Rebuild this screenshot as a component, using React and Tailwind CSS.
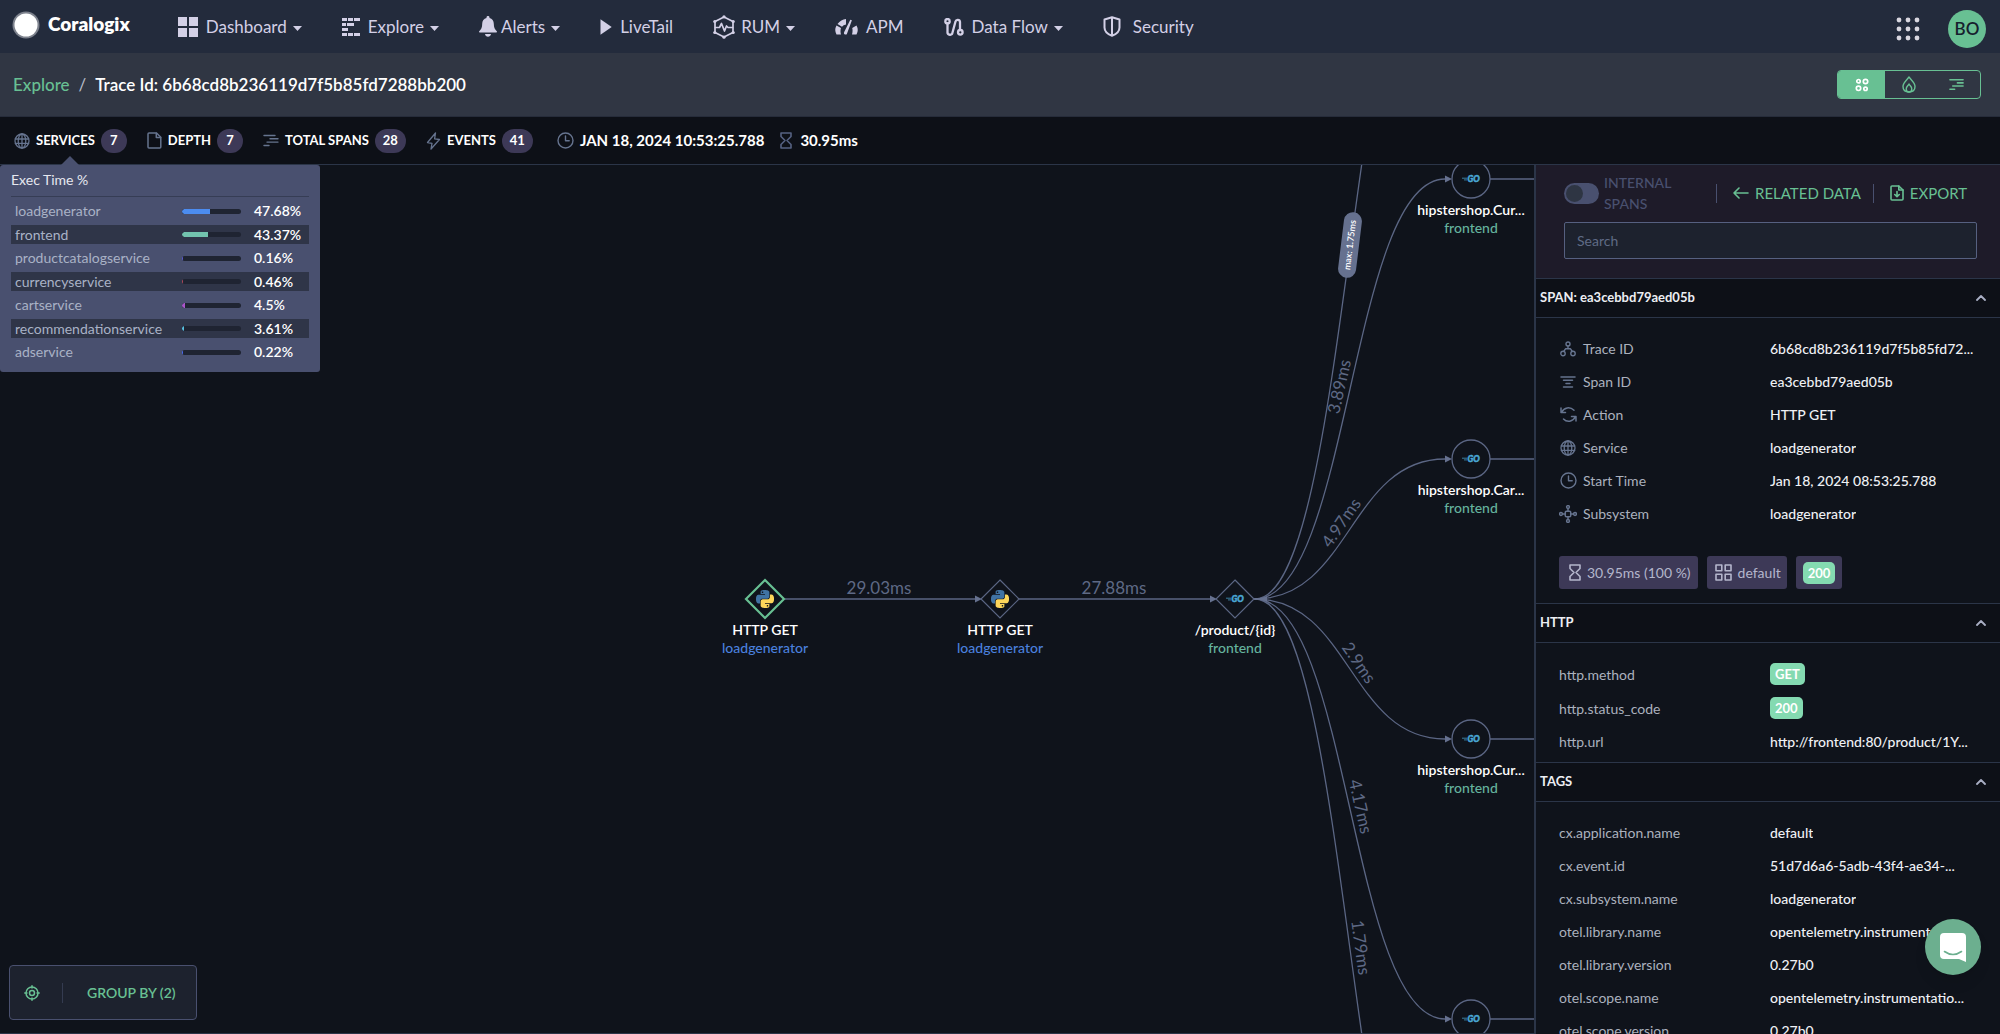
import React from "react";

const LINE = "#5b6684";

function Svg({ size = 16, w, h, box = 24, sw = 2, className = "", children }) {
  return (
    <svg
      width={w || size}
      height={h || size}
      viewBox={typeof box === "number" ? `0 0 ${box} ${box}` : box}
      fill="none"
      stroke="currentColor"
      strokeWidth={sw}
      strokeLinecap="round"
      strokeLinejoin="round"
      className={"shrink-0 " + className}
      aria-hidden="true"
    >
      {children}
    </svg>
  );
}

/* ---------- navigation icons ---------- */

const DashboardIcon = () => (
  <Svg size={20} box={20}>
    <g fill="currentColor" stroke="none">
      <rect x="0" y="0" width="9" height="9" />
      <rect x="11" y="0" width="9" height="9" />
      <rect x="0" y="11" width="9" height="9" />
      <rect x="11" y="11" width="9" height="9" />
    </g>
  </Svg>
);

const ExploreIcon = () => (
  <Svg size={18} box={18}>
    <g fill="currentColor" stroke="none">
      <path d="M0 0h5v3H0zM6 0h5v3H6zM12 0h6v3h-6zM0 5h4v3H0zM5 5h7v3H5zM0 10h6v3H0zM0 15h5v3H0zM6 15h5v3H6zM12 15h6v3h-6z" />
    </g>
  </Svg>
);

const BellIcon = () => (
  <Svg w={18} h={21} box="0 0 18 21">
    <path
      d="M9 0c.9 0 1.5.6 1.5 1.4v.6c2.7.7 4.3 3 4.3 5.8 0 4 1 5.7 3 7.4.4.4.1 1.2-.5 1.2H.7c-.6 0-.9-.8-.5-1.2 2-1.7 3-3.4 3-7.4C3.2 5 4.8 2.7 7.5 2v-.6C7.5.6 8.1 0 9 0zM6 18h6c-.3 1.7-1.5 2.7-3 2.7S6.3 19.7 6 18z"
      fill="currentColor"
      stroke="none"
    />
  </Svg>
);

const PlayIcon = () => (
  <Svg w={12} h={16} box="0 0 12 16">
    <path d="M0.5 0.3L11.7 8L0.5 15.7z" fill="currentColor" stroke="none" />
  </Svg>
);

const RumIcon = () => (
  <Svg w={22} h={24} box="0 0 22 24" sw={1.7}>
    <path d="M11 2L20 6.5V17.5L11 22L2 17.5V6.5z" />
    <path d="M2.5 12.5H6.5L8.5 8.5L11.5 16L13.5 11L15 12.5H19.5" />
    <g fill="currentColor" stroke="none">
      <circle cx="11" cy="1.8" r="1.6" />
      <circle cx="11" cy="22.2" r="1.6" />
      <circle cx="1.8" cy="6.5" r="1.6" />
      <circle cx="20.2" cy="6.5" r="1.6" />
      <circle cx="1.8" cy="17.5" r="1.6" />
      <circle cx="20.2" cy="17.5" r="1.6" />
    </g>
  </Svg>
);

const ApmIcon = () => (
  <Svg w={23} h={16} box="0 0 23 16">
    <g fill="currentColor" stroke="none">
      <path d="M1.5 6.5L6 9Q5 12 6 15.5H1.5Q-1 11 1.5 6.5z" />
      <path d="M2.5 5Q6 .5 11 0V5.5Q8.3 6 7 7.8z" />
      <path d="M15.3.8L16.9 1.3 11.8 15.3Q10.5 16 9.2 15 8.5 14 9.3 12.8z" />
      <path d="M21.5 6.5L17.2 9Q18 12 17 15.5H21.5Q24 11 21.5 6.5z" />
    </g>
  </Svg>
);

const FlowIcon = () => (
  <Svg w={20} h={18} box="0 0 20 18" sw={2.3}>
    <circle cx="3.5" cy="3.2" r="2.2" />
    <circle cx="16.3" cy="14.3" r="2.3" />
    <path d="M3.5 5.5V14A2.5 2.5 0 0 0 8.5 14.5L11.5 3.5A2.3 2.3 0 0 1 16 3.8V11.5" />
  </Svg>
);

const ShieldIcon = () => (
  <Svg w={18} h={21} box="0 0 18 21" sw={2}>
    <path d="M9 1.2L16.5 3.5V11.5C16.5 15.5 13 18.3 9 19.7C5 18.3 1.5 15.5 1.5 11.5V3.5z" />
    <path d="M9 2V19" />
  </Svg>
);

const Caret = () => (
  <Svg w={9} h={5} box="0 0 9 5" className="mt-1">
    <path d="M0 0h9L4.5 5z" fill="currentColor" stroke="none" />
  </Svg>
);

/* ---------- small line icons ---------- */

const GlobeIcon = () => (
  <Svg size={16} box={16} sw={1.3}>
    <circle cx="8" cy="8" r="7" />
    <ellipse cx="8" cy="8" rx="3.8" ry="7" />
    <path d="M8 1V15M1.3 6H14.7M1.3 10.3H14.7" />
  </Svg>
);

const FileIcon = () => (
  <Svg w={15} h={17} box="0 0 15 17" sw={1.5}>
    <path d="M2 1H9.5L13.8 5.3V15A1 1 0 0 1 12.8 16H2A1 1 0 0 1 1 15V2A1 1 0 0 1 2 1z" />
    <path d="M9.3 1.2V5.5H13.6" />
  </Svg>
);

const SpansIcon = () => (
  <Svg w={16} h={13} box="0 0 16 13" sw={1.4}>
    <path d="M1 1.5H12M7 4.8H15M4 8.1H15M1 11.5H6" />
  </Svg>
);

const BoltIcon = () => (
  <Svg w={15} h={18} box="0 0 15 18" sw={1.3}>
    <path d="M9.5 1L1.5 10.5L6 11.3L5 17L13.5 7.5L8.6 6.8z" />
  </Svg>
);

const ClockIcon = () => (
  <Svg size={17} box={17} sw={1.4}>
    <circle cx="8.5" cy="8.5" r="7.5" />
    <path d="M8.5 4V8.8H12.2" />
  </Svg>
);

const HourglassIcon = () => (
  <Svg w={12} h={17} box="0 0 12 17" sw={1.6}>
    <path d="M1 1H11V4.5L7 8.5L11 12.5V16H1V12.5L5 8.5L1 4.5z" />
  </Svg>
);

const TreeIcon = () => (
  <Svg size={16} box={16} sw={1.4}>
    <circle cx="8" cy="3" r="2" />
    <circle cx="3" cy="12.5" r="2.2" />
    <circle cx="13" cy="12.5" r="2.2" />
    <path d="M8 5V7.5M4 10L5.5 7.8H10.5L12 10" />
  </Svg>
);

const SpanIdIcon = () => (
  <Svg size={16} box={16} sw={1.5}>
    <path d="M1 3H15M3.5 6.3H12.5M6 9.6H10M3.5 12.9H12.5" />
  </Svg>
);

const RefreshIcon = () => (
  <Svg size={17} box={17} sw={1.5}>
    <path d="M1 2V6.5H5.5M1.8 6C4 1.3 10 .3 14 4.3" />
    <path d="M16 15V10.5H11.5M15.2 11C13 15.7 7 16.7 3.5 13" />
  </Svg>
);

const NodesIcon = () => (
  <Svg size={18} box={18} sw={1.5}>
    <rect x="6.3" y="6.3" width="5.4" height="5.4" rx="1" />
    <circle cx="9" cy="2" r="1.4" />
    <circle cx="9" cy="16" r="1.4" />
    <circle cx="2" cy="9" r="1.4" />
    <circle cx="16" cy="9" r="1.4" />
    <path d="M9 3.5V6M9 12V14.5M3.5 9H6M12 9H14.5" />
  </Svg>
);

const GridIcon = () => (
  <Svg size={17} box={17} sw={1.6}>
    <rect x="1" y="1" width="5.8" height="5.8" />
    <rect x="10.2" y="1" width="5.8" height="5.8" />
    <rect x="1" y="10.2" width="5.8" height="5.8" />
    <rect x="10.2" y="10.2" width="5.8" height="5.8" />
  </Svg>
);

const ArrowLeftIcon = () => (
  <Svg w={16} h={12} box="0 0 16 12" sw={1.6}>
    <path d="M6 1L1 6L6 11M1 6H15" />
  </Svg>
);

const ExportIcon = () => (
  <Svg w={14} h={16} box="0 0 14 16" sw={1.6}>
    <path d="M2 1H8.8L13 5V14A1 1 0 0 1 12 15H2A1 1 0 0 1 1 14V2A1 1 0 0 1 2 1z" />
    <path d="M7 6.5V11.5M4.7 9.5L7 11.7L9.3 9.5M8.8 1V5H13" />
  </Svg>
);

const TargetIcon = () => (
  <Svg size={16} box={16} sw={1.5}>
    <circle cx="8" cy="8" r="6" />
    <circle cx="8" cy="8" r="2.5" />
    <path d="M8 .8V3M8 13V15.2M.8 8H3M13 8H15.2" />
  </Svg>
);

const ChevronUp = () => (
  <Svg w={10} h={6} box="0 0 10 6" sw={1.8} className="text-[#a9afc4]">
    <path d="M1 5L5 1L9 5" />
  </Svg>
);

/* ---------- header ---------- */

const NAV = [
  { label: "Dashboard", icon: <DashboardIcon />, menu: true, gap: "gap-2" },
  { label: "Explore", icon: <ExploreIcon />, menu: true, gap: "gap-2" },
  { label: "Alerts", icon: <BellIcon />, menu: true, gap: "gap-1" },
  { label: "LiveTail", icon: <PlayIcon />, gap: "gap-2" },
  { label: "RUM", icon: <RumIcon />, menu: true, gap: "gap-1.5" },
  { label: "APM", icon: <ApmIcon />, gap: "gap-2" },
  { label: "Data Flow", icon: <FlowIcon />, menu: true, gap: "gap-2" },
  { label: "Security", icon: <ShieldIcon />, gap: "gap-3" },
];

function Header() {
  return (
    <header className="flex h-[53px] shrink-0 items-center bg-[#232b3c] pl-3 pr-[14px]">
      <a href="#home" className="flex items-center gap-2 pb-1">
        <svg width="28" height="28" viewBox="0 0 28 28" aria-hidden="true">
          <circle cx="14" cy="14" r="13.5" fill="#7d828d" />
          <circle cx="14" cy="14" r="11.5" fill="#fff" />
        </svg>
        <span className="text-[19px] font-extrabold text-white">Coralogix</span>
      </a>
      <nav className="ml-12 flex items-center gap-10 text-[17px] text-[#d3d0e6]">
        {NAV.map((n) => (
          <button key={n.label} className={"flex items-center " + n.gap}>
            {n.icon}
            <span className="flex items-center gap-[6px]">
              {n.label}
              {n.menu && <Caret />}
            </span>
          </button>
        ))}
      </nav>
      <div className="ml-auto flex items-center gap-7">
        <button aria-label="Apps" className="mt-1 text-[#d9d7e0]">
          <svg width="24" height="24" viewBox="0 0 24 24" fill="currentColor" aria-hidden="true">
            {[3, 12, 21].map((y) => [3, 12, 21].map((x) => <circle key={x + "-" + y} cx={x} cy={y} r="2.4" />))}
          </svg>
        </button>
        <button className="mt-1 flex h-[38px] w-[38px] items-center justify-center rounded-full bg-[#68c093] text-[17px] font-semibold text-[#16202e]">
          BO
        </button>
      </div>
    </header>
  );
}

function Breadcrumb() {
  return (
    <div className="flex h-16 shrink-0 items-center justify-between border-b border-[#262c3a] bg-[#303643] pl-[13px] pr-[19px]">
      <div className="flex items-center gap-[9px] text-[17px]">
        <a href="#explore" className="font-medium text-[#68c093]">Explore</a>
        <span className="text-[#b9bdc9]">/</span>
        <h1 className="font-semibold text-white">Trace Id: 6b68cd8b236119d7f5b85fd7288bb200</h1>
      </div>
      <div className="flex h-[29px] w-36 overflow-hidden rounded-[4px] border border-[#68c093] text-[#68c093]">
        <button aria-label="Graph view" className="flex flex-1 items-center justify-center bg-[#68c093] text-white">
          <Svg size={14} box={14} sw={1.7}>
            <circle cx="3.5" cy="3.2" r="1.7" />
            <circle cx="10.5" cy="3.5" r="2.2" />
            <circle cx="3.5" cy="10.3" r="2.2" />
            <circle cx="10.5" cy="10.8" r="1.7" />
          </Svg>
        </button>
        <button aria-label="Flame view" className="flex flex-1 items-center justify-center">
          <Svg w={14} h={17} box="0 0 14 17" sw={1.4}>
            <path d="M7 1C9.5 4.5 13 6.5 13 10.5C13 14 10.5 16 7 16C3.5 16 1 14 1 10.5C1 6.5 4.5 4.5 7 1z" />
            <path d="M7 8C8 10 9.8 10.5 9.8 13C9.8 15 8.5 16 7 16C5.5 16 4.2 15 4.2 13C4.2 10.5 6 10 7 8z" />
          </Svg>
        </button>
        <button aria-label="Gantt view" className="flex flex-1 items-center justify-center">
          <Svg w={15} h={13} box="0 0 16 13" sw={1.7}>
            <path d="M1 1.5H15M9 4.8H15M4 8.1H15M1 11.5H6" />
          </Svg>
        </button>
      </div>
    </div>
  );
}

function Badge({ children }) {
  return (
    <span className="flex h-6 min-w-[26px] items-center justify-center rounded-full bg-[#3d3957] px-2 text-[13px] font-bold text-white">
      {children}
    </span>
  );
}

function Stats() {
  return (
    <div className="flex h-[47px] shrink-0 items-center gap-5 bg-[#0d1017] pl-[14px] text-[13px] font-bold text-white">
      {[
        ["SERVICES", "7", <GlobeIcon />],
        ["DEPTH", "7", <FileIcon />],
        ["TOTAL SPANS", "28", <SpansIcon />],
        ["EVENTS", "41", <BoltIcon />],
      ].map(([label, n, icon]) => (
        <div key={label} className="flex items-center gap-[6px]">
          <span className="text-[#66748f]">{icon}</span>
          {label}
          <Badge>{n}</Badge>
        </div>
      ))}
      <div className="flex items-center gap-[6px] text-[15px]">
        <span className="ml-1 text-[#66748f]"><ClockIcon /></span>
        JAN 18, 2024 10:53:25.788
      </div>
      <div className="-ml-1 flex items-center gap-2 text-[15px]">
        <span className="text-[#566283]"><HourglassIcon /></span>
        30.95ms
      </div>
    </div>
  );
}

/* ---------- execution time popover ---------- */

const EXEC = [
  ["loadgenerator", 47.68, "#4c8cf0"],
  ["frontend", 43.37, "#72c3ae"],
  ["productcatalogservice", 0.16, "#5b5bd0"],
  ["currencyservice", 0.46, "#b0485a"],
  ["cartservice", 4.5, "#a955c9"],
  ["recommendationservice", 3.61, "#58bfe0"],
  ["adservice", 0.22, "#4c6cf0"],
];

function ExecPopover() {
  return (
    <div className="absolute left-0 top-0 w-80 rounded-[3px] bg-[#49506f] px-[11px] pb-[6px]">
      <svg width="18" height="9" viewBox="0 0 18 9" className="absolute -top-[9px] left-[61px]" aria-hidden="true">
        <path d="M9 0L18 9H0z" fill="#49506f" />
      </svg>
      <h2 className="h-8 border-b border-[#363d55] text-[14px] leading-[30px] text-[#e6e8ef]">Exec Time %</h2>
      <table className="w-full border-collapse text-[14px]">
        <tbody>
          {EXEC.map(([name, pct, color], i) => (
            <tr key={name} className={i % 2 ? "h-[19px] bg-[#2f3548] leading-[19px]" : "h-7 leading-[28px]"}>
              <td className="p-0 pl-1 text-[#a9b2c6]">{name}</td>
              <td className="w-[72px] p-0">
                <div className="h-[5px] w-[59px] overflow-hidden rounded-full bg-[#1f2432]">
                  <div
                    className="h-full min-w-px rounded-l-full"
                    style={{ width: `${pct}%`, backgroundColor: color }}
                  />
                </div>
              </td>
              <td className="w-[55px] p-0 font-semibold text-white">{pct}%</td>
            </tr>
          ))}
        </tbody>
      </table>
    </div>
  );
}

/* ---------- trace graph ---------- */

function GoLogo({ x, y }) {
  return (
    <g>
      <path d={`M${x - 9} ${y - 0.8}h5M${x - 7} ${y + 0.9}h3`} stroke="#3b7f9f" strokeWidth="1" />
      <text
        x={x + 2.5}
        y={y + 3}
        textAnchor="middle"
        fontSize="8.5"
        fontWeight="900"
        fontStyle="italic"
        fill="#4aa8d4"
        stroke="#4aa8d4"
        strokeWidth="0.5"
      >
        GO
      </text>
    </g>
  );
}

function PythonLogo({ x, y }) {
  return (
    <svg x={x - 9} y={y - 9} width="18" height="18" viewBox="0 0 24 24">
      <path
        fill="#4073a3"
        d="M14.25.18l.9.2.73.26.59.3.45.32.34.34.25.34.16.33.1.3.04.26.02.2-.01.13V8.5l-.05.63-.13.55-.21.46-.26.38-.3.31-.33.25-.35.19-.35.14-.33.1-.3.07-.26.04-.21.02H8.77l-.69.05-.59.14-.5.22-.41.27-.33.32-.27.35-.2.36-.15.37-.1.35-.07.32-.04.27-.02.21v3.06H3.17l-.21-.03-.28-.07-.32-.12-.35-.18-.36-.26-.36-.36-.35-.46-.32-.59-.28-.73-.21-.88-.14-1.05-.05-1.23.06-1.22.16-1.04.24-.87.32-.71.36-.57.4-.44.42-.33.42-.24.4-.16.36-.1.32-.05.24-.01h.16l.06.01h8.16v-.83H6.18l-.01-2.75-.02-.37.05-.34.11-.31.17-.28.25-.26.31-.23.38-.2.44-.18.51-.15.58-.12.64-.1.71-.06.77-.04.84-.02 1.27.05zm-6.3 1.98l-.23.33-.08.41.08.41.23.34.33.22.41.09.41-.09.33-.22.23-.34.08-.41-.08-.41-.23-.33-.33-.22-.41-.09-.41.09z"
      />
      <path
        fill="#fdd65a"
        d="M21.04 6.11l.28.06.32.12.35.18.36.27.36.35.35.47.32.59.28.73.21.88.14 1.04.05 1.23-.06 1.23-.16 1.04-.24.86-.32.71-.36.57-.4.45-.42.33-.42.24-.4.16-.36.09-.32.05-.24.02-.16-.01h-8.22v.82h5.84l.01 2.76.02.36-.05.34-.11.31-.17.29-.25.25-.31.24-.38.2-.44.17-.51.15-.58.13-.64.09-.71.07-.77.04-.84.01-1.27-.04-1.07-.14-.9-.2-.73-.25-.59-.3-.45-.33-.34-.34-.25-.34-.16-.33-.1-.3-.04-.25-.02-.2.01-.13v-5.34l.05-.64.13-.54.21-.46.26-.38.3-.32.33-.24.35-.2.35-.14.33-.1.3-.06.26-.04.21-.02.13-.01h5.84l.69-.05.59-.14.5-.21.41-.28.33-.32.27-.35.2-.36.15-.36.1-.35.07-.32.04-.28.02-.21V6.07h2.09l.14.01zm-6.47 14.25l-.23.33-.08.41.08.41.23.33.33.23.41.08.41-.08.33-.23.23-.33.08-.41-.08-.41-.23-.33-.33-.23-.41-.08-.41.08z"
      />
    </svg>
  );
}

const NODES = [
  { x: 765, y: 434, shape: "diamond", logo: "py", title: "HTTP GET", sub: "loadgenerator", active: true },
  { x: 1000, y: 434, shape: "diamond", logo: "py", title: "HTTP GET", sub: "loadgenerator" },
  { x: 1235, y: 434, shape: "diamond", logo: "go", title: "/product/{id}", sub: "frontend" },
  { x: 1471, y: 14, shape: "circle", logo: "go", title: "hipstershop.Cur...", sub: "frontend" },
  { x: 1471, y: 294, shape: "circle", logo: "go", title: "hipstershop.Car...", sub: "frontend" },
  { x: 1471, y: 574, shape: "circle", logo: "go", title: "hipstershop.Cur...", sub: "frontend" },
  { x: 1471, y: 854, shape: "circle", logo: "go" },
];

const EDGES = [
  { y: -266, label: "" },
  { y: 14, label: "3.89ms" },
  { y: 294, label: "4.97ms" },
  { y: 574, label: "2.9ms" },
  { y: 854, label: "4.17ms" },
  { y: 1134, label: "1.79ms" },
];

function Graph() {
  return (
    <svg className="block h-full w-full" role="img" aria-label="Trace service graph">
      <g fill="none" stroke={LINE} strokeWidth="1.3">
        <path d="M785 434H978M1019 434H1213" />
        {EDGES.map((e, i) => (
          <path key={i} id={"edge" + i} d={`M1255 434C1350 434 1350 ${e.y} 1445 ${e.y}`} />
        ))}
        {[14, 294, 574, 854].map((y) => (
          <path key={y} d={`M1490 ${y}H1600`} />
        ))}
      </g>
      <g fill="#66718f">
        <path d="M975 430.5L982 434L975 437.5zM1210 430.5L1217 434L1210 437.5z" />
        <path d="M1254 433H1261L1267 431.5V436.5L1261 435H1254z" />
        {[14, 294, 574, 854].map((y) => (
          <path key={y} d={`M1445 ${y - 3.5}L1452 ${y}L1445 ${y + 3.5}z`} />
        ))}
      </g>
      <g fill="#5e6985" fontSize="17">
        <text x="879" y="429" textAnchor="middle">29.03ms</text>
        <text x="1114" y="429" textAnchor="middle">27.88ms</text>
        {EDGES.map((e, i) =>
          e.label ? (
            <text key={i} dy="-5" textAnchor="middle">
              <textPath href={"#edge" + i} startOffset="50%">{e.label}</textPath>
            </text>
          ) : null
        )}
      </g>
      <g transform="translate(1350 80) rotate(-83)">
        <rect x="-33" y="-9" width="66" height="18" rx="9" fill="#66718f" />
        <text y="3" textAnchor="middle" fontSize="9" fontWeight="600" fill="#fff">max: 1.75ms</text>
      </g>
      {NODES.map((n, i) => (
        <g key={i}>
          {n.shape === "diamond" ? (
            <path
              d={`M${n.x} ${n.y - 19}L${n.x + 19} ${n.y}L${n.x} ${n.y + 19}L${n.x - 19} ${n.y}z`}
              fill="#0f131b"
              stroke={n.active ? "#68c093" : LINE}
              strokeWidth={n.active ? 2.2 : 1.2}
            />
          ) : (
            <circle cx={n.x} cy={n.y} r="19" fill="#0f131b" stroke={LINE} strokeWidth="1.3" />
          )}
          {n.logo === "py" ? <PythonLogo x={n.x} y={n.y} /> : <GoLogo x={n.x} y={n.y} />}
          {n.title && (
            <>
              <text x={n.x} y={n.y + 36} textAnchor="middle" fontSize="14" fontWeight="600" fill="#fff">{n.title}</text>
              <text
                x={n.x}
                y={n.y + 54}
                textAnchor="middle"
                fontSize="14"
                fontWeight="500"
                fill={n.sub === "frontend" ? "#65b39e" : "#4a80de"}
              >
                {n.sub}
              </text>
            </>
          )}
        </g>
      ))}
    </svg>
  );
}

/* ---------- details panel ---------- */

function SectionHead({ children }) {
  return (
    <h2 className="shrink-0 border-y border-[#2b3548] bg-[#0d1017] text-[13px] font-bold text-[#eceef3]">
      <button className="flex h-[38px] w-full items-center justify-between pl-1 pr-[14px]">
        {children}
        <ChevronUp />
      </button>
    </h2>
  );
}

function StatusTag({ children }) {
  return (
    <span className="inline-block rounded-[5px] bg-[#84dab1] px-[5px] text-[13px] font-bold leading-[22px] text-white">
      {children}
    </span>
  );
}

function Chip({ children, className = "" }) {
  return (
    <span className={"flex h-[33px] items-center gap-[6px] rounded-[3px] bg-[#3d3957] text-[14px] text-[#b4b6cc] " + className}>
      {children}
    </span>
  );
}

function Row({ label, icon, value, tag }) {
  return (
    <div className={tag ? "flex h-[34px] items-center" : "flex h-[33px] items-center"}>
      <dt className="flex w-[211px] shrink-0 items-center gap-[6px] text-[#abb1be]">
        {icon && <span className="flex w-[18px] justify-center text-[#66748f]">{icon}</span>}
        {label}
      </dt>
      <dd className="min-w-0 truncate font-medium text-[#eff1f5]">{tag ? <StatusTag>{value}</StatusTag> : value}</dd>
    </div>
  );
}

function Panel() {
  return (
    <aside className="flex w-[466px] shrink-0 flex-col overflow-hidden border-l-2 border-[#2b3548] bg-[#0f131b] text-[14px]">
      <div className="shrink-0 bg-[#1e1b29] pb-[19px] pl-7 pr-[23px] pt-[7px]">
        <div className="flex items-center">
          <label className="flex items-center gap-[5px] text-[#49506f]">
            <input type="checkbox" className="peer sr-only" />
            <span className="flex h-[21px] w-[35px] shrink-0 items-center rounded-full bg-[#49506f] pl-0.5">
              <span className="h-[17px] w-[17px] rounded-full bg-[#2e3543]" />
            </span>
            <span className="w-28 font-medium leading-[21px]">INTERNAL<br />SPANS</span>
          </label>
          <span className="h-[19px] border-l border-[#49506f]" />
          <button className="ml-4 flex items-center gap-[6px] whitespace-nowrap text-[15px] text-[#68c093]">
            <ArrowLeftIcon />
            RELATED DATA
          </button>
          <span className="ml-3 h-[19px] border-l border-[#49506f]" />
          <button className="ml-4 flex items-center gap-[6px] text-[15px] text-[#68c093]">
            <ExportIcon />
            EXPORT
          </button>
        </div>
        <input
          type="search"
          aria-label="Search"
          placeholder="Search"
          className="mt-2 block h-[37px] w-full rounded-[2px] border border-[#566080] bg-[#1d222e] px-3 text-[14px] text-white placeholder:text-[#5f6b85]"
        />
      </div>

      <SectionHead>SPAN: ea3cebbd79aed05b</SectionHead>
      <dl className="shrink-0 pl-[23px] pr-4 pt-[14px]">
        <Row icon={<TreeIcon />} label="Trace ID" value="6b68cd8b236119d7f5b85fd72..." />
        <Row icon={<SpanIdIcon />} label="Span ID" value="ea3cebbd79aed05b" />
        <Row icon={<RefreshIcon />} label="Action" value="HTTP GET" />
        <Row icon={<GlobeIcon />} label="Service" value="loadgenerator" />
        <Row icon={<ClockIcon />} label="Start Time" value="Jan 18, 2024 08:53:25.788" />
        <Row icon={<NodesIcon />} label="Subsystem" value="loadgenerator" />
      </dl>
      <div className="flex shrink-0 gap-[9px] pb-[14px] pl-[23px] pt-[26px]">
        <Chip className="pl-[10px] pr-[7px]">
          <HourglassIcon />
          30.95ms (100 %)
        </Chip>
        <Chip className="pl-2 pr-[6px]">
          <GridIcon />
          default
        </Chip>
        <Chip className="px-[7px]">
          <StatusTag>200</StatusTag>
        </Chip>
      </div>

      <SectionHead>HTTP</SectionHead>
      <dl className="shrink-0 pb-1 pl-[23px] pr-4 pt-[14px]">
        <Row label="http.method" value="GET" tag />
        <Row label="http.status_code" value="200" tag />
        <Row label="http.url" value="http://frontend:80/product/1Y..." />
      </dl>

      <SectionHead>TAGS</SectionHead>
      <dl className="shrink-0 pl-[23px] pr-4 pt-[14px]">
        <Row label="cx.application.name" value="default" />
        <Row label="cx.event.id" value="51d7d6a6-5adb-43f4-ae34-..." />
        <Row label="cx.subsystem.name" value="loadgenerator" />
        <Row label="otel.library.name" value="opentelemetry.instrumentatio..." />
        <Row label="otel.library.version" value="0.27b0" />
        <Row label="otel.scope.name" value="opentelemetry.instrumentatio..." />
        <Row label="otel.scope.version" value="0.27b0" />
      </dl>
    </aside>
  );
}

export default function App() {
  return (
    <div className="flex h-screen flex-col overflow-hidden bg-[#0f131b] font-['Lato','Noto_Sans',sans-serif]">
      <Header />
      <Breadcrumb />
      <Stats />
      <div className="flex min-h-0 flex-1 border-t border-[#2b3548]">
        <main className="relative min-w-0 flex-1 border-b border-[#2b3548]">
          <Graph />
          <ExecPopover />
          <div className="absolute bottom-[13px] left-[9px] flex h-[55px] items-center rounded-[4px] border border-[#49506f] bg-[#1d222e] pl-[14px] pr-5 text-[#68c093]">
            <button aria-label="Center graph">
              <TargetIcon />
            </button>
            <span className="ml-[22px] h-5 border-l border-[#343b50]" />
            <button className="ml-6 text-[14px] font-semibold">GROUP BY (2)</button>
          </div>
        </main>
        <Panel />
      </div>
      <button
        aria-label="Open chat"
        className="fixed bottom-[59px] right-[19px] flex h-14 w-14 items-center justify-center rounded-full bg-[#6caf8f] shadow-lg"
      >
        <svg width="26" height="29" viewBox="0 0 26 29" aria-hidden="true">
          <path d="M4 0H22Q26 0 26 4V29L19 26H4Q0 26 0 22V4Q0 0 4 0z" fill="#fff" />
          <path d="M4.5 18.5Q13 24.5 21.5 18.5" fill="none" stroke="#6caf8f" strokeWidth="1.6" strokeLinecap="round" />
        </svg>
      </button>
    </div>
  );
}
